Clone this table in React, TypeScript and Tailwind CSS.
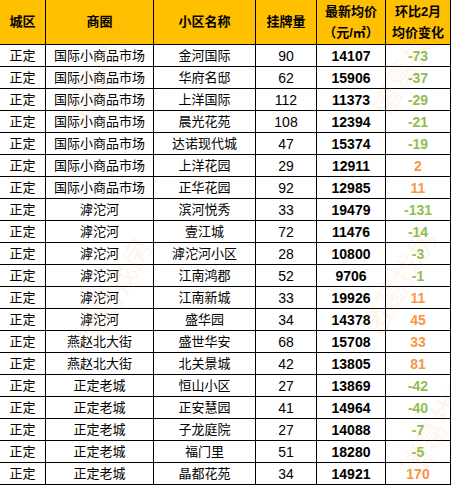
import React from "react";

type Row = [string, string, string, string, string, string];

const rows: Row[] = [
  ["正定", "国际小商品市场", "金河国际", "90", "14107", "-73"],
  ["正定", "国际小商品市场", "华府名邸", "62", "15906", "-37"],
  ["正定", "国际小商品市场", "上洋国际", "112", "11373", "-29"],
  ["正定", "国际小商品市场", "晨光花苑", "108", "12394", "-21"],
  ["正定", "国际小商品市场", "达诺现代城", "47", "15374", "-19"],
  ["正定", "国际小商品市场", "上洋花园", "29", "12911", "2"],
  ["正定", "国际小商品市场", "正华花园", "92", "12985", "11"],
  ["正定", "滹沱河", "滨河悦秀", "33", "19479", "-131"],
  ["正定", "滹沱河", "壹江城", "72", "11476", "-14"],
  ["正定", "滹沱河", "滹沱河小区", "28", "10800", "-3"],
  ["正定", "滹沱河", "江南鸿郡", "52", "9706", "-1"],
  ["正定", "滹沱河", "江南新城", "33", "19926", "11"],
  ["正定", "滹沱河", "盛华园", "34", "14378", "45"],
  ["正定", "燕赵北大街", "盛世华安", "68", "15708", "33"],
  ["正定", "燕赵北大街", "北关景城", "42", "13805", "81"],
  ["正定", "正定老城", "恒山小区", "27", "13869", "-42"],
  ["正定", "正定老城", "正安慧园", "41", "14964", "-40"],
  ["正定", "正定老城", "子龙庭院", "27", "14088", "-7"],
  ["正定", "正定老城", "福门里", "51", "18280", "-5"],
  ["正定", "正定老城", "晶都花苑", "34", "14921", "170"],
];

const cjk = "font-['Liberation_Sans','Noto_Sans_CJK_SC',sans-serif]";
const cell =
  "flex items-center justify-center border-r border-b border-black overflow-hidden whitespace-nowrap";

export default function App() {
  return (
    <div className={`relative w-[451px] h-[485px] bg-white overflow-hidden text-black ${cjk}`}>
      <div className="grid grid-cols-[46px_108px_102px_61px_69px_65px] grid-rows-[45px_repeat(20,22px)]">
        {/* header */}
        <div className={`${cell} bg-[#FFC000] text-[13px] font-bold leading-[20px]`}>城区</div>
        <div className={`${cell} bg-[#FFC000] text-[13px] font-bold leading-[20px]`}>商圈</div>
        <div className={`${cell} bg-[#FFC000] text-[13px] font-bold leading-[20px]`}>小区名称</div>
        <div className={`${cell} bg-[#FFC000] text-[13px] font-bold leading-[20px]`}>挂牌量</div>
        <div className={`${cell} bg-[#FFC000] text-[13px] font-bold leading-[21px] flex-col`}>
          <span>最新均价</span>
          <span>（元/㎡）</span>
        </div>
        <div className={`${cell} bg-[#FFC000] text-[13px] font-bold leading-[21px] flex-col`}>
          <span>环比2月</span>
          <span>均价变化</span>
        </div>
        {rows.map((r, i) => {
          const neg = r[5].startsWith("-");
          return (
            <React.Fragment key={i}>
              <div className={`${cell} text-[13px] leading-[20px]`}>{r[0]}</div>
              <div className={`${cell} text-[13px] leading-[20px]`}>{r[1]}</div>
              <div className={`${cell} text-[13px] leading-[20px]`}>{r[2]}</div>
              <div className={`${cell} text-[14px] leading-[20px]`}>{r[3]}</div>
              <div className={`${cell} text-[14px] font-bold leading-[20px]`}>{r[4]}</div>
              <div
                className={`${cell} text-[14px] font-bold leading-[20px] ${
                  neg ? "text-[#92BD4F]" : "text-[#F79646]"
                }`}
              >
                {r[5]}
              </div>
            </React.Fragment>
          );
        })}
      </div>
      {/* watermark */}
      <div className="pointer-events-none absolute inset-0 text-[30px] font-normal text-[#F79646] opacity-[0.09]">
        <span className="absolute left-[40px] top-[50px] -rotate-[60deg] whitespace-nowrap">诸葛找房</span>
        <span className="absolute left-[55px] top-[270px] -rotate-[60deg] whitespace-nowrap">诸葛找房</span>
        <span className="absolute left-[350px] top-[40px] -rotate-[60deg] whitespace-nowrap">诸葛找房</span>
        <span className="absolute left-[340px] top-[260px] -rotate-[60deg] whitespace-nowrap">诸葛找房</span>
        <span className="absolute left-[380px] top-[400px] -rotate-[60deg] whitespace-nowrap">诸葛找房</span>
      </div>
    </div>
  );
}
